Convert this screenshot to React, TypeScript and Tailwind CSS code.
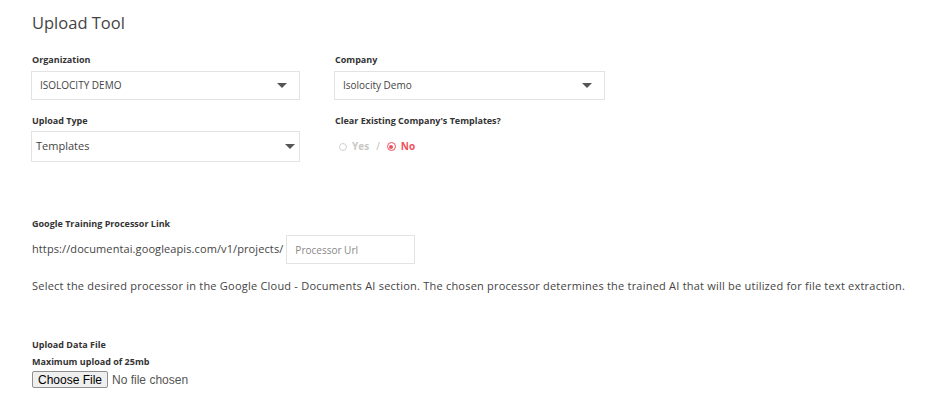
import { useState } from 'react';

const FONT = "font-['Open_Sans','Lato',sans-serif]";

function Caret() {
  return (
    <svg width="10" height="5" viewBox="0 0 10 5" className="shrink-0">
      <path d="M0 0h10L5 5z" fill="#555" />
    </svg>
  );
}

function SelectBox({ value, className = '' }: { value: string; className?: string }) {
  return (
    <div
      className={`flex items-center justify-between border border-[#e3e3e3] bg-white ${className}`}
    >
      <span className="text-[#444]">{value}</span>
      <Caret />
    </div>
  );
}

function Label({ children }: { children: React.ReactNode }) {
  return <div className="text-[9px] font-bold leading-none text-[#333]">{children}</div>;
}

export default function App() {
  const [clear, setClear] = useState<'yes' | 'no'>('no');

  return (
    <div className={`h-[417px] w-[930px] bg-white pl-[32px] text-[#333] ${FONT}`}>
      <h1 className="pt-[13px] text-[16.5px] leading-[20px] font-normal text-[#444]">Upload Tool</h1>

      <div className="mt-[22px] grid grid-cols-[268px_270px] gap-x-[35px]">
        <div>
          <Label>Organization</Label>
          <SelectBox
            value="ISOLOCITY DEMO"
            className="mt-[7px] h-[29px] pl-[8px] pr-[12px] text-[10px] -ml-px"
          />
        </div>
        <div>
          <Label>Company</Label>
          <SelectBox
            value="Isolocity Demo"
            className="mt-[7px] h-[29px] pl-[8px] pr-[12px] text-[10px] -ml-px"
          />
        </div>

        <div className="mt-[16px]">
          <Label>Upload Type</Label>
          <SelectBox
            value="Templates"
            className="mt-[6px] h-[31px] pl-[4px] pr-[4px] text-[11px] -ml-px"
          />
        </div>
        <div className="mt-[16px]">
          <Label>Clear Existing Company's Templates?</Label>
          <div className="mt-[14px] flex items-center gap-[4px] pl-[4px] text-[10px] font-bold">
            <button
              onClick={() => setClear('yes')}
              className="flex items-center gap-[5px] text-[#c8c8c8]"
            >
              <span
                className={`flex h-[8px] w-[8px] items-center justify-center rounded-full border ${
                  clear === 'yes' ? 'border-[#f0505a]' : 'border-[#d0d0d0]'
                }`}
              >
                {clear === 'yes' && <span className="h-[4px] w-[4px] rounded-full bg-[#f0505a]" />}
              </span>
              <span className={clear === 'yes' ? 'text-[#f0505a]' : ''}>Yes</span>
            </button>
            <span className="px-[3px] font-normal text-[#bbb]">/</span>
            <button
              onClick={() => setClear('no')}
              className="flex items-center gap-[5px] text-[#c8c8c8]"
            >
              <span
                className={`flex h-[9px] w-[9px] items-center justify-center rounded-full border ${
                  clear === 'no' ? 'border-[#f0505a]' : 'border-[#d0d0d0]'
                }`}
              >
                {clear === 'no' && <span className="h-[4px] w-[4px] rounded-full bg-[#f0505a]" />}
              </span>
              <span className={clear === 'no' ? 'text-[#f0505a]' : ''}>No</span>
            </button>
          </div>
        </div>
      </div>

      {/* Processor link */}
      <div className="mt-[57px]">
        <Label>Google Training Processor Link</Label>
        <div className="mt-[7px] flex items-center">
          <span className="text-[11px] tracking-[0.1px] text-[#444]">
            https://documentai.googleapis.com/v1/projects/
          </span>
          <input
            placeholder="Processor Url"
            className="ml-[3px] h-[29px] w-[129px] border border-[#e3e3e3] px-[8px] text-[10px] text-[#444] outline-none placeholder:text-[#888]"
          />
        </div>
        <p className="mt-[14px] text-[11px] tracking-[0.22px] text-[#444]">
          Select the desired processor in the Google Cloud - Documents AI section. The chosen processor
          determines the trained AI that will be utilized for file text extraction.
        </p>
      </div>

      {/* Upload file */}
      <div className="mt-[45px]">
        <Label>Upload Data File</Label>
        <div className="mt-[8px]">
          <Label>Maximum upload of 25mb</Label>
        </div>
        <div className="mt-[5px] flex items-center font-['Liberation_Sans',sans-serif] text-[12px]">
          <label className="flex h-[17px] cursor-pointer items-center rounded-[2px] border border-[#8f8f8f] bg-[#efefef] px-[5px] text-black">
            Choose File
            <input type="file" className="hidden" />
          </label>
          <span className="ml-[4px] text-[#555]">No file chosen</span>
        </div>
      </div>
    </div>
  );
}
